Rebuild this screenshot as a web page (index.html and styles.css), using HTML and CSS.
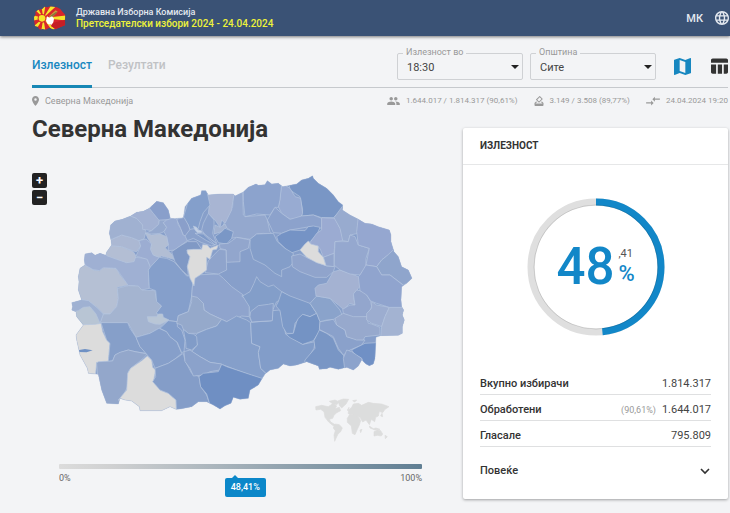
FILE: index.html
```html
<!DOCTYPE html>
<html lang="mk">
<head>
<meta charset="utf-8">
<meta name="viewport" content="width=device-width, initial-scale=1">
<title>Претседателски избори 2024</title>
<link rel="stylesheet" href="styles.css">
</head>
<body>
<header class="topbar">
  <svg class="logo" viewBox="0 0 99 72" aria-hidden="true">
    <defs><clipPath id="country"><path d="M3 34L8 25 7 17 17 11 28 9 35 2 44 4 50 1 61 2 72 4 82 9 87 16 97 27 96 44 97 57 83 63 70 69 60 70 49 65 39 71 29 69 20 71 14 62 6 60 4 49Z"/></clipPath></defs>
    <g clip-path="url(#country)">
      <path fill="#d8262b" d="M0 0h99v72H0z"/>
      <path fill="#f5e52c" d="M31 36L-5 26v20zM31 36L-5 0 6-8zM31 36L24-6h14zM31 36L58-8 70 0zM31 36L105 28v16zM31 36L72 75H58zM31 36L24 80h14zM31 36L-4 66 5 78z"/>
      <circle cx="27" cy="37" r="13" fill="#d8262b"/><circle cx="27" cy="37" r="10" fill="#f5e52c"/>
      <path fill="#c9a03c" d="M48 31L68 13 74 17 56 36z"/><path fill="#88743d" d="M51 30L70 17 72 20 56 34z"/>
      <path fill="#fff" d="M42 31L49 35 57 31 63 38 61 49 56 56 44 54 39 44z"/>
      <path fill="#c51f25" d="M62 50L96 41V60L67 68 54 61z"/>
    </g>
  </svg>
  <div class="brand">
    <span class="org">Државна Изборна Комисија</span>
    <span class="event">Претседателски избори 2024 - 24.04.2024</span>
  </div>
  <button class="lang" type="button">МК
    <svg class="globe" viewBox="2 2 20 20" aria-hidden="true"><path fill="currentColor" d="M11.99 2C6.47 2 2 6.48 2 12s4.47 10 9.99 10C17.52 22 22 17.52 22 12S17.52 2 11.99 2zm6.93 6h-2.95a15.65 15.65 0 0 0-1.38-3.56A8.03 8.03 0 0 1 18.92 8zM12 4.04c.83 1.2 1.48 2.53 1.91 3.96h-3.82c.43-1.43 1.08-2.76 1.91-3.96zM4.26 14C4.1 13.36 4 12.69 4 12s.1-1.36.26-2h3.38c-.08.66-.14 1.32-.14 2s.06 1.34.14 2H4.26zm.82 2h2.95c.32 1.25.78 2.45 1.38 3.56A7.99 7.99 0 0 1 5.08 16zm2.95-8H5.08a7.99 7.99 0 0 1 4.33-3.56A15.65 15.65 0 0 0 8.03 8zM12 19.96c-.83-1.2-1.48-2.53-1.91-3.96h3.82c-.43 1.43-1.08 2.76-1.91 3.96zM14.34 14H9.66c-.09-.66-.16-1.32-.16-2s.07-1.35.16-2h4.68c.09.65.16 1.32.16 2s-.07 1.34-.16 2zm.25 5.56c.6-1.11 1.06-2.31 1.38-3.56h2.95a8.03 8.03 0 0 1-4.33 3.56zM16.36 14c.08-.66.14-1.32.14-2s-.06-1.34-.14-2h3.38c.16.64.26 1.31.26 2s-.1 1.36-.26 2h-3.38z"/></svg>
  </button>
</header>

<div class="page">
  <div class="toolbar">
    <nav class="tabs">
      <a class="tab active" href="#turnout">Излезност</a>
      <a class="tab" href="#results">Резултати</a>
    </nav>
    <div class="controls">
      <div class="field"><label for="time">Излезност во</label><select id="time"><option>18:30</option></select></div>
      <div class="field"><label for="town">Општина</label><select id="town"><option>Сите</option></select></div>
      <button class="view on" type="button" aria-label="Мапа"><svg viewBox="3 3 18 18"><path fill="currentColor" d="M20.5 3l-.16.03L15 5.1 9 3 3.36 4.9c-.21.07-.36.25-.36.48V20.5c0 .28.22.5.5.5l.16-.03L9 18.9l6 2.1 5.64-1.9c.21-.07.36-.25.36-.48V3.5c0-.28-.22-.5-.5-.5zM15 19l-6-2.11V5l6 2.11V19z"/></svg></button>
      <button class="view" type="button" aria-label="Табела"><svg viewBox="2 3 20 19"><path fill="currentColor" d="M10 10.02h5V21h-5zM17 21h3c1.100 0 2-.9 2-2v-9h-5v11zM20 3H4c-1.100 0-2 .9-2 2v3h20V5c0-1.100-.9-2-2-2zM2 19c0 1.100.9 2 2 2h4V10H2v9z"/></svg></button>
    </div>
  </div>

  <div class="meta">
    <span class="item place"><svg class="pin" viewBox="5 2 14 20"><path fill="currentColor" d="M12 2C8.130 2 5 5.130 5 9c0 5.250 7 13 7 13s7-7.750 7-13c0-3.870-3.130-7-7-7zm0 9.500a2.500 2.500 0 1 1 0-5 2.500 2.500 0 0 1 0 5z"/></svg>Северна Македонија</span>
    <span class="item"><svg class="people" viewBox="1 5 22 14"><path fill="currentColor" d="M16 11c1.660 0 2.990-1.340 2.990-3S17.660 5 16 5s-3 1.340-3 3 1.340 3 3 3zm-8 0c1.660 0 2.990-1.340 2.990-3S9.660 5 8 5 5 6.340 5 8s1.340 3 3 3zm0 2c-2.330 0-7 1.170-7 3.500V19h14v-2.500c0-2.330-4.670-3.500-7-3.500zm8 0c-.29 0-.62.020-.97.050 1.160.84 1.970 1.970 1.970 3.450V19h6v-2.500c0-2.330-4.670-3.500-7-3.500z"/></svg>1.644.017 / 1.814.317 (90,61%)</span>
    <span class="item"><svg class="ballot" viewBox="3 2 18 20"><path fill="currentColor" d="M18 13h-.68l-2 2h1.910L19 17H5l1.780-2h2.050l-2-2H6l-3 3v4c0 1.100.89 2 1.990 2H19c1.100 0 2-.89 2-2v-4l-3-3zm-1-5.050l-4.950 4.950-3.540-3.540 4.950-4.950L17 7.950zm-4.240-5.660L6.390 8.660a1 1 0 0 0 0 1.410l4.950 4.950c.39.39 1.020.39 1.410 0l6.360-6.360a1 1 0 0 0 0-1.410L14.160 2.300a.98.98 0 0 0-1.400-.01z"/></svg>3.149 / 3.508 (89,77%)</span>
    <span class="item"><svg class="sync" viewBox="1 4 22 16"><path fill="currentColor" d="M9.010 14H1v2h8.010v3L13 15l-3.990-4v3zm5.980-1v-3H23V8h-8.010V5L11 9l3.990 4z"/></svg>24.04.2024 19:20</span>
  </div>

  <main class="content">
    <section class="mapside">
      <h1>Северна Македонија</h1>
      <div class="mapbox">
        <div class="zoom"><button type="button" aria-label="Зголеми">+</button><button type="button" aria-label="Намали">−</button></div>
        <svg class="map" viewBox="-3 0 1089 825" role="img" aria-label="Мапа на општини">
          <defs><clipPath id="border"><path id="edge" d="M75 252L95 248 105 256 120 250 137 256 140 246 155 225 153 210 148 190 152 165 165 153 187 148 212 138 230 127 250 124 268 115 290 94 310 98 325 120 331 145 345 146 370 143 375 110 395 85 422 75 425 62 437 62 445 75 480 72 520 72 525 78 550 66 565 52 588 42 595 46 615 44 622 32 635 42 655 40 668 50 690 46 710 42 725 30 745 25 758 17 760 25 775 40 800 55 820 75 835 95 848 105 847 120 870 135 895 148 915 160 935 162 955 170 988 180 993 195 993 215 1002 245 1015 260 1025 290 1045 300 1056 325 1040 340 1025 350 1023 390 1025 410 1031 420 1027 435 1033 450 1027 470 1027 490 1015 496 962 497 948 502 947 525 945 565 940 582 928 587 918 582 905 570 895 588 880 600 860 592 835 598 810 592 800 596 778 598 775 588 740 575 710 585 690 588 670 582 655 595 630 600 615 612 605 628 595 645 570 660 565 685 540 688 520 682 513 700 495 707 480 717 460 705 440 695 415 695 395 710 360 717 348 718 330 710 305 722 240 722 238 710 215 693 195 690 180 685 175 702 140 700 125 660 115 613 85 610 82 595 60 555 50 510 48 495 70 465 50 440 48 425 35 420 38 410 35 398 65 390 55 360 57 335 55 320 60 295 75 285 73 270Z"/></clipPath></defs>
          <g class="towns" clip-path="url(#border)">
            <path fill="#879fca" d="M0 0H1086V825H0z"/>
            <path fill="#b5c0d4" d="M75 285L40 280V390L65 390 85 392 110 412 130 432 150 432 170 410 175 385 172 352 205 345 180 315 168 295 130 293 118 302 100 300Z"/>
            <path fill="#9fb0d3" d="M60 240L137 250 200 278 210 275 225 262 260 265 272 293 265 300 268 355 245 360 225 348 205 347 185 318 168 295 130 293 118 302 98 298 75 285Z"/>
            <path fill="#b3bed4" d="M135 240L155 225 185 230 220 245 228 258 222 275 200 278 170 268 140 257Z"/>
            <path fill="#abb8d3" d="M145 213L185 195 215 203 237 212 242 228 230 245 220 243 185 230 150 227Z"/>
            <path fill="#a0b1d1" d="M140 130L212 138 230 145 248 165 258 185 252 207 237 212 215 203 185 195 140 214Z"/>
            <path fill="#a3b2d3" d="M212 138L210 110 268 110 280 130 298 150 296 163 275 182 248 178 248 165 230 145Z"/>
            <path fill="#899fcb" d="M268 115L290 85 335 100 331 148 315 150 298 152 280 130Z"/>
            <path fill="#95a9ce" d="M298 150L322 150 318 160 310 158 320 172 312 185 300 190 275 192 255 190 275 182 296 163Z"/>
            <path fill="#98abd2" d="M320 150L350 140 355 165 362 175 370 195 382 200 382 212 360 228 345 240 325 242 325 225 320 200 312 185 320 172 310 158Z"/>
            <path fill="#9cadd2" d="M237 212L258 207 275 222 272 238 280 255 298 262 272 293 262 268 228 258 242 228Z"/>
            <path fill="#b2bed4" d="M257 190L275 195 300 192 320 200 325 225 315 233 335 252 342 268 320 262 305 258 298 262 280 255 272 238 275 222 265 208Z"/>
            <path fill="#a4b4d0" d="M175 385L172 355 205 347 235 348 245 360 285 362 290 395 305 408 290 430 325 450 297 475 270 490 228 502 205 460 120 458 130 432 150 432 170 410Z"/>
            <path fill="#859fcb" d="M298 262L320 265 342 275 360 295 380 318 400 316 395 378 385 425 355 437 352 455 325 452 300 445 290 428 305 408 290 395 287 362 268 355 265 300 272 290Z"/>
            <path fill="#b9c6d6" d="M262 440L290 440 295 432 308 432 310 442 327 450 300 463 285 462 265 455Z"/>
            <path fill="#9fb1d2" d="M25 390L60 388 85 392 110 412 130 432 120 460 110 455 90 440 30 430Z"/>
            <path fill="#b8c5d4" d="M40 425L55 422 70 412 90 410 108 432 120 460 105 465 70 465 40 450Z"/>
            <path fill="#dcdcdc" d="M40 465L105 463 123 460 128 485 140 510 150 520 145 575 110 577 106 620 40 620Z"/>
            <path fill="#6f91c4" stroke="none" d="M53 541L75 537 98 541 80 547 55 546Z"/>
            <path fill="#869fc9" d="M123 458L203 458 210 475 228 502 240 530 258 550 225 545 205 540 180 548 165 555 158 572 145 575 150 520 140 510Z"/>
            <path fill="#93a7cb" d="M110 580L116 575 158 573 165 555 180 547 205 540 225 545 262 552 250 565 212 595 205 605 203 650 195 665 180 715 120 715Z"/>
            <path fill="#dcdcdc" d="M262 558L275 570 278 592 287 600 280 635 290 645 300 660 325 670 348 690 350 730 220 730 175 690 200 660 203 610 212 595 245 572Z"/>
            <path fill="#869fca" d="M228 502L270 490 297 475 320 485 330 500 350 515 365 550 345 567 325 580 285 595 275 570 262 555 240 530Z"/>
            <path fill="#829dca" d="M300 475L325 452 352 455 352 470 365 480 375 510 372 545 365 548 352 517 330 500 320 485Z"/>
            <path fill="#849dc8" d="M285 595L325 580 345 567 370 550 375 572 395 610 417 620 422 650 440 675 450 705 430 730 350 730 348 690 325 670 300 660 278 635 287 620Z"/>
            <path fill="#8fa4cd" d="M400 315L475 312 490 325 515 350 550 375 545 378 560 390 568 410 568 440 545 438 530 445 500 455 485 448 450 432 432 420 430 400 395 378Z"/>
            <path fill="#95a9cb" d="M395 378L412 382 430 400 432 420 450 432 485 448 470 468 440 478 410 490 385 490 370 478 365 465 350 460 355 437 385 425 395 395Z"/>
            <path fill="#859fca" d="M485 448L500 455 530 438 560 450 572 458 575 520 600 530 595 548 602 595 618 610 605 628 530 600 485 583 450 577 420 560 395 545 412 525 405 498 412 490 440 478 470 468Z"/>
            <path fill="#819cc8" d="M370 478L385 490 400 492 410 500 412 525 395 540 378 535 377 515Z"/>
            <path fill="#8ba2cb" d="M372 545L390 540 420 560 450 577 485 582 480 600 450 605 430 615 400 618 390 595 375 575Z"/>
            <path fill="#6f8fc3" d="M485 583L500 590 530 600 575 615 615 628 600 700 480 730 450 705 440 672 422 650 417 620 430 610 475 605Z"/>
            <path fill="#829dc9" d="M572 457L635 452 637 422 660 420 677 492 728 523 765 515 762 535 745 565 735 580 735 610 600 640 618 610 602 595 595 548 600 530 575 520Z"/>
            <path fill="#839ec9" d="M548 378L570 365 582 340 590 320 600 335 625 350 640 345 665 365 690 380 650 395 637 422 635 452 575 455 568 440 568 410Z"/>
            <path fill="#879fca" d="M572 425L595 407 625 403 640 400 637 452 575 456 570 440Z"/>
            <path fill="#7d9ac8" d="M655 395L665 365 690 378 750 400 770 430 750 440 728 433 705 460 700 490 680 490 668 470 660 422 648 408Z"/>
            <path fill="#7493c4" d="M710 455L715 445 728 433 750 440 770 430 780 455 778 485 760 512 728 523 690 503 677 492 700 490Z"/>
            <path fill="#7996c5" d="M778 480L800 490 820 505 835 540 850 555 860 590 855 610 730 610 735 570 765 535 762 512Z"/>
            <path fill="#8aa1cb" d="M780 455L820 448 830 465 855 480 860 500 890 508 915 510 905 525 870 540 850 555 835 535 820 500 778 478Z"/>
            <path fill="#8aa3cb" d="M750 400L770 378 810 385 840 420 848 440 820 448 800 450 780 455 770 430Z"/>
            <path fill="#97a9cd" d="M825 445L850 430 880 435 920 440 925 460 935 462 960 472 960 495 915 500 910 510 890 510 860 500 855 480 830 465Z"/>
            <path fill="#a4b2d2" d="M765 355L775 345 800 340 820 305 840 300 870 310 895 320 905 345 895 355 880 375 885 405 870 400 850 418 835 405 810 385 768 378Z"/>
            <path fill="#93a6cd" d="M880 372L890 360 915 365 932 395 935 410 920 440 880 440 850 430 848 418 870 405 885 405Z"/>
            <path fill="#9cadd0" d="M935 395L950 405 988 412 975 440 965 470 935 460 920 450 920 430 935 415Z"/>
            <path fill="#a3b3d2" d="M988 412L1045 412 1045 505 962 505 965 470 975 440Z"/>
            <path fill="#7090c5" d="M875 540L915 520 950 518 960 600 915 590 905 565 885 555Z"/>
            <path fill="#8ca3cc" d="M860 540L875 545 890 555 905 565 910 600 855 605 850 565Z"/>
            <path fill="#7996c5" d="M685 30L760 0 860 100 848 118 820 143 785 143 760 135 725 138 728 120 720 80 690 60Z"/>
            <path fill="#98abd2" d="M665 40L690 55 705 80 722 85 728 130 720 145 690 148 665 130 655 110 660 85Z"/>
            <path fill="#8ca3cd" d="M550 56L620 20 665 40 660 90 655 112 645 112 630 135 590 132 555 140 550 95Z"/>
            <path fill="#94a8ce" d="M520 65L548 68 550 135 555 140 615 135 622 150 630 185 640 195 610 190 590 192 570 208 530 202 515 205 515 185 490 165 500 140 518 110Z"/>
            <path fill="#a8b5d3" d="M437 52L525 60 518 95 515 120 495 160 485 150 480 172 465 150 445 130 448 105Z"/>
            <path fill="#849fcb" d="M370 143L390 75 425 50 440 60 450 105 430 128 420 155 415 175 390 180 385 165Z"/>
            <path fill="#8a9fca" d="M350 148L372 142 385 165 390 180 380 200 370 195 362 175Z"/>
            <path fill="#8aa1cb" d="M445 130L462 150 462 165 458 190 470 220 440 200 425 180 430 160Z"/>
            <path fill="#a3b3d1" d="M465 165L480 172 495 162 500 172 485 185 462 192Z"/>
            <path fill="#7a97c6" d="M465 200L485 185 495 175 520 185 515 205 500 222 475 218Z"/>
            <path fill="#8aa1cb" d="M382 212L375 198 390 178 410 175 450 205 470 222 455 228 425 218 400 205Z"/>
            <path fill="#7f9ac8" d="M405 190L430 192 465 225 440 212Z"/>
            <path fill="#c3d0e4" d="M400 168L410 172 414 180 425 183 424 188 412 188 405 180Z"/>
            <path fill="#8ca2cc" d="M622 150L645 112 665 130 690 148 725 138 760 135 785 145 785 175 750 170 690 180 665 190 640 188Z"/>
            <path fill="#7593c5" d="M650 200L665 190 690 180 735 182 745 170 760 168 780 172 770 195 750 215 720 240 690 250 675 235 655 215Z"/>
            <path fill="#849ec9" d="M570 208L590 192 640 190 652 215 675 235 700 250 697 280 690 290 665 300 665 320 645 310 615 285 580 268 570 235Z"/>
            <path fill="#92a6cd" d="M478 222L505 220 530 202 570 210 565 235 540 245 540 275 500 277 498 240 480 235Z"/>
            <path fill="#8fa4cc" d="M445 272L478 238 498 240 500 300 475 312 435 308Z"/>
            <path fill="#8099c5" d="M335 245L360 228 382 215 410 215 425 238 381 240 390 260 382 290 385 318 365 300 345 275Z"/>
            <path fill="#dcdcdc" d="M381 240L400 238 425 238 428 224 442 225 450 235 475 225 470 238 458 240 450 268 440 262 440 300 420 315 405 325 402 348 390 325 382 290 390 260 382 250Z"/>
            <path fill="#9babd2" d="M785 143L825 145 840 175 848 200 848 212 825 215 822 250 790 262 780 235 752 225 752 215 770 190 785 180Z"/>
            <path fill="#98abcf" d="M848 108L895 140 895 190 870 195 865 215 848 212 840 175 822 143Z"/>
            <path fill="#95a8cf" d="M825 215L865 215 870 195 885 200 895 225 928 235 918 265 918 290 900 315 870 312 840 300 822 285Z"/>
            <path fill="#95a7d0" d="M895 140L1000 170 1012 245 980 258 965 270 950 290 918 285 928 235 895 225 890 185Z"/>
            <path fill="#8fa5cc" d="M1005 235L1070 330 1030 345 990 315 965 315 950 290 965 270 980 258Z"/>
            <path fill="#90a4ce" d="M918 285L950 290 965 315 990 315 1035 350 1035 412 988 412 950 400 932 393 920 375 900 362 895 320 900 315Z"/>
            <path fill="#90a4cc" d="M695 258L720 252 745 265 800 288 825 290 820 305 800 322 765 322 720 305 697 290Z"/>
            <path fill="#93a6cd" d="M798 287L790 262 822 250 822 290Z"/>
            <path fill="#dcdcdc" d="M745 213L752 222 775 228 775 245 790 262 798 287 770 278 740 262 720 240 735 222Z"/>
          </g>
          <use href="#edge" fill="none" stroke="#a8b9d8"/>
          <g class="world">
            <path d="M767 710L785 706 805 710 820 700 830 708 825 716 838 712 842 722 830 728 822 736 818 745 808 748 812 756 822 762 828 768 818 766 806 756 795 742 792 725 782 718 768 720Z"/>
            <path d="M808 694L825 690 838 696 830 704 816 700ZM835 692L850 687 866 688 858 702 845 714 838 706Z"/>
            <path d="M824 762L838 764 847 774 842 785 834 792 828 805 824 814 822 795 826 782 820 774Z"/>
            <path d="M868 735L880 732 895 740 902 752 898 765 892 778 885 794 877 790 874 768 862 757 862 745Z"/>
            <path d="M864 730L868 718 875 712 880 702 895 700 905 706 925 697 940 700 965 702 987 710 975 718 968 728 958 724 955 738 947 742 944 755 934 748 928 764 918 750 908 756 900 742 888 738 878 732 870 734Z"/>
            <path d="M942 785L953 780 962 782 968 792 964 798 952 796 942 798Z"/>
            <path d="M906 778L902 788 900 780ZM928 768L940 776 948 774 960 778 945 780 930 774ZM862 720L867 712 865 724ZM878 692L890 690 884 696ZM962 738L966 730 968 740ZM975 796L982 800 976 806Z"/>
          </g>
        </svg>
      </div>
      <div class="scale">
        <div class="bar"></div>
        <div class="ends"><span>0%</span><span>100%</span></div>
        <div class="marker" style="left:48.41%">48,41%</div>
      </div>
    </section>

    <aside class="card">
      <h2>ИЗЛЕЗНОСТ</h2>
      <div class="body">
        <div class="donut">
          <svg viewBox="0 0 138 138" aria-hidden="true">
            <circle class="track" cx="69" cy="69" r="65"/>
            <circle class="value" cx="69" cy="69" r="65" pathLength="100" stroke-dasharray="48.41 100" transform="rotate(-90 69 69)"/>
            <circle class="inner" cx="69" cy="69" r="62"/>
          </svg>
          <div class="figure"><span class="big">48</span><span class="rest"><span class="frac">,41</span><span class="pct">%</span></span></div>
        </div>
        <dl class="stats">
          <div><dt>Вкупно избирачи</dt><dd>1.814.317</dd></div>
          <div><dt>Обработени</dt><dd><small>(90,61%)</small>1.644.017</dd></div>
          <div><dt>Гласале</dt><dd>795.809</dd></div>
        </dl>
        <button class="more" type="button">Повеќе<svg viewBox="0 0 10 7" aria-hidden="true"><path fill="none" stroke="currentColor" stroke-width="1.600" d="M1 1l4 4 4-4"/></svg></button>
      </div>
    </aside>
  </main>
</div>
</body>
</html>
```
FILE: styles.css
```css
* { box-sizing: border-box; }
body { margin: 0; background: #f3f4f6; color: #333; font-family: Roboto, "Liberation Sans", sans-serif; font-size: 11px; }
button { font: inherit; color: inherit; border: 0; background: none; padding: 0; }
svg { display: block; flex: none; }

.topbar { display: flex; align-items: center; height: 36px; padding: 0 1px 0 33px; background: #3a5275; box-shadow: 0 1px 3px rgba(0,0,0,.5); color: #e4e9f0; }
.logo { width: 33px; height: 24px; }
.brand { display: flex; flex-direction: column; margin-left: 10px; flex: 1; }
.org { font-size: 9px; line-height: 11px; font-weight: 500; }
.event { font-size: 10px; line-height: 11px; font-weight: 500; color: #eef23a; }
.lang { display: flex; align-items: center; gap: 12px; font-weight: 500; }
.globe { width: 14px; height: 14px; }

.page { padding: 0 2px 12px 32px; }
.toolbar { display: flex; justify-content: space-between; height: 52px; border-bottom: 1px solid #c6c9cd; }
.tabs { display: flex; gap: 16px; }
.tab { height: 52px; padding-top: 21px; line-height: 16px; font-size: 12px; font-weight: 500; color: #c0c2c5; text-decoration: none; }
.tab.active { color: #1787c0; border-bottom: 3px solid #1787b5; }
.controls { display: flex; align-items: center; gap: 7px; padding-top: 10px; }
.field { position: relative; width: 126px; }
.field label { position: absolute; left: 6px; top: -6px; padding: 0 3px; background: #f3f4f6; color: #999; font-size: 9px; line-height: 11px; }
.field select { display: block; width: 100%; height: 27px; padding: 2px 9px 0; border: 1px solid #cfd1d4; border-radius: 2px; appearance: none; color: #444; font: 11px/23px Roboto, sans-serif; background: #f3f4f6; }
.field::after { content: ""; position: absolute; right: 4px; top: 12px; border: 4px solid transparent; border-top-color: #222; border-bottom: 0; }
.view { margin-left: 11px; color: #333; }
.view svg { width: 17px; height: 17px; }
.view.on { color: #1787c0; }
.view + .view { margin-left: 13px; }

.meta { display: flex; gap: 16px; height: 25px; align-items: center; color: #999; font-size: 8px; }
.item { display: flex; align-items: center; gap: 6px; }
.place { margin-right: auto; font-size: 9px; }
.pin { width: 7px; height: 10px; }
.people { width: 13px; height: 8px; }
.ballot { width: 10px; height: 10px; }
.sync { width: 14px; height: 10px; }

.content { display: grid; grid-template-columns: minmax(0, 1fr) 265px; gap: 41px; align-items: start; }
h1 { margin: 0; padding-top: 1px; font-size: 24px; line-height: 30px; font-weight: 700; }
.mapbox { display: flex; gap: 12px; padding-top: 26px; }
.zoom { display: flex; flex-direction: column; gap: 2px; width: 15px; padding-top: 3px; }
.zoom button { height: 15px; line-height: 15px; border-radius: 2px; background: #222; color: #fff; font-size: 13px; font-weight: 700; text-align: center; }
.map { flex: 1 1 0; min-width: 0; }
.towns { stroke: #b5c5e0; stroke-width: 2; stroke-linejoin: round; }
.world { fill: #dcdddd; stroke: #dcdddd; stroke-width: 2; stroke-linejoin: round; }
.scale { position: relative; margin: 19px 0 0 27px; }
.bar { height: 5px; border-radius: 1px; background: linear-gradient(90deg, #dcdcdc, #cfd0d1 15%, #5f7e93); }
.ends { display: flex; justify-content: space-between; padding-top: 3px; color: #666; font-size: 9px; line-height: 12px; }
.marker { position: absolute; top: 14px; margin-left: -10px; padding: 0 6px; border-radius: 2px; background: #0b87c9; color: #fff; font-size: 9px; line-height: 19px; font-weight: 500; }
.marker::before { content: ""; position: absolute; left: 7px; top: -3px; border: 3px solid transparent; border-top: 0; border-bottom-color: #0b87c9; }

.card { margin-top: 15px; background: #fff; border-radius: 2px; box-shadow: 0 1px 3px rgba(0,0,0,.35); }
h2 { margin: 0; padding: 0 17px; border-bottom: 1px solid #e6e7e8; font-size: 10px; line-height: 36px; font-weight: 700; }
.body { padding: 33px 17px 20px; }
.donut { display: grid; width: 138px; height: 138px; margin: 0 auto; place-items: center; }
.donut > * { grid-area: 1 / 1; }
.donut svg { width: 138px; }
.donut circle { fill: none; }
.donut .track { stroke: #dfdfdf; stroke-width: 7; }
.donut .value { stroke: #1287c8; stroke-width: 7; }
.donut .inner { stroke: #000; stroke-opacity: .12; stroke-width: 1; }
.figure { display: flex; align-items: center; gap: 4px; color: #1287c8; }
.big { font-size: 51px; line-height: 50px; font-weight: 500; }
.rest { display: flex; flex-direction: column; }
.frac { color: #555; font-size: 11px; line-height: 14px; }
.pct { font-size: 22px; line-height: 26px; font-weight: 500; }
.stats { margin: 33px 0 0; }
.stats div { display: flex; justify-content: space-between; align-items: center; height: 26px; padding-top: 4px; border-bottom: 1px solid #dfe0e1; }
dt { font-size: 11px; font-weight: 500; }
dd { margin: 0; font-size: 11px; color: #444; }
dd small { margin-right: 6px; font-size: 9px; color: #999; }
.more { display: flex; justify-content: space-between; align-items: center; width: 100%; margin-top: 16px; padding-right: 1px; line-height: 16px; font-weight: 500; }
.more svg { width: 10px; height: 7px; }
```
